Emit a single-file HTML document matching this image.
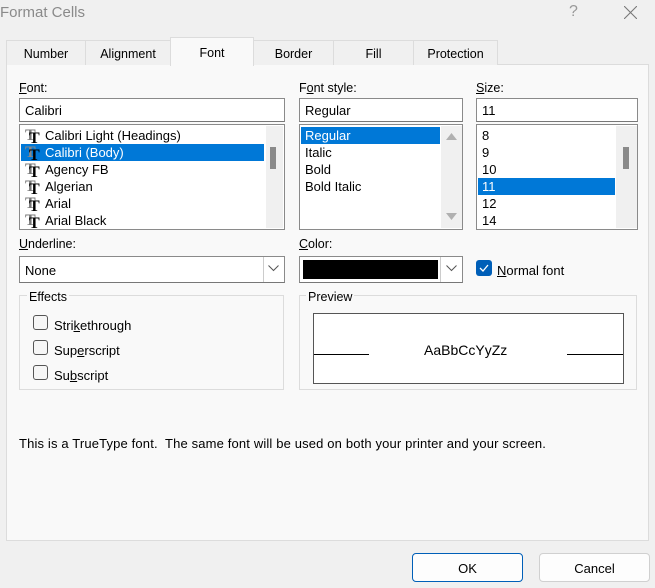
<!DOCTYPE html>
<html><head><style>
*{box-sizing:border-box;margin:0;padding:0}
body{width:655px;height:588px;background:#f0f0f0;font-family:"Liberation Sans",sans-serif;font-size:12.5px;color:#000;position:relative;overflow:hidden}
.a{position:absolute}
.tab{position:absolute;top:40px;height:25px;border:1px solid #dcdcdc;border-bottom:none;background:#f0f0f0;text-align:center;line-height:26px;font-size:12.5px}
.box{position:absolute;background:#fff;border:1px solid #8a8a8a}
.inp{position:absolute;background:#fff;border:1px solid #8a8a8a;border-bottom:1px solid #777;padding-left:5px;line-height:24px;font-size:13px}
.li{height:17px;line-height:18px;padding-left:4px;font-size:13px;white-space:nowrap}
.sel{background:#0078d7;color:#fff}
.tt{display:inline-block;width:16px;height:15px;position:relative;vertical-align:-3px;margin-right:4px;font-family:"Liberation Serif",serif;font-weight:bold}
.tt b{position:absolute;font-size:16px;line-height:15px}
.grp{position:absolute;border:1px solid #dcdcdc}
.cb{position:absolute;width:15px;height:15px;border:1px solid #555;border-radius:3px;background:#f6f6f6}
u{text-decoration:underline}
.btn{position:absolute;top:553px;width:111px;height:29px;background:#fdfdfd;border:1px solid #d0d0d0;border-radius:4px;text-align:center;line-height:29px;font-size:13px}
</style></head><body>
<div class="a" style="left:0;top:4px;font-size:15px;color:#8a8a8a">Format Cells</div>
<div class="a" style="left:569px;top:3px;font-size:16px;color:#999">?</div>
<svg class="a" style="left:624px;top:6px" width="13" height="13"><path d="M0 0L13 13M13 0L0 13" stroke="#777" stroke-width="1.1"/></svg>

<div class="a" style="left:6px;top:64px;width:643px;height:477px;background:#f9f9f9;border:1px solid #dcdcdc"></div>
<div class="tab" style="left:6px;width:80px">Number</div>
<div class="tab" style="left:85px;width:86px">Alignment</div>
<div class="tab" style="left:253px;width:81px">Border</div>
<div class="tab" style="left:333px;width:81px">Fill</div>
<div class="tab" style="left:413px;width:85px">Protection</div>
<div class="tab" style="left:170px;top:37px;height:29px;width:84px;background:#f9f9f9;line-height:30px">Font</div>

<div class="a" style="left:19px;top:81px"><u>F</u>ont:</div>
<div class="inp" style="left:19px;top:98px;width:266px;height:24px">Calibri</div>
<div class="box" style="left:19px;top:124px;width:266px;height:106px;padding-top:2px;padding-left:1px">
 <div class="li" style="width:243px"><span class="tt"><b style="left:0;top:0;color:#777">T</b><b style="left:4px;top:3px">T</b></span>Calibri Light (Headings)</div>
 <div class="li sel" style="width:243px"><span class="tt"><b style="left:0;top:0;color:#888">T</b><b style="left:4px;top:3px;color:#000">T</b></span>Calibri (Body)</div>
 <div class="li"><span class="tt"><b style="left:0;top:0;color:#777">T</b><b style="left:4px;top:3px">T</b></span>Agency FB</div>
 <div class="li"><span class="tt"><b style="left:0;top:0;color:#777">T</b><b style="left:4px;top:3px">T</b></span>Algerian</div>
 <div class="li"><span class="tt"><b style="left:0;top:0;color:#777">T</b><b style="left:4px;top:3px">T</b></span>Arial</div>
 <div class="li"><span class="tt"><b style="left:0;top:0;color:#777">T</b><b style="left:4px;top:3px">T</b></span>Arial Black</div>
 <div class="a" style="left:246px;top:1px;width:17px;height:102px;background:#f0f0f0"></div>
 <div class="a" style="left:250px;top:22px;width:6px;height:22px;background:#8a8a8a"></div>
</div>

<div class="a" style="left:299px;top:81px">F<u>o</u>nt style:</div>
<div class="inp" style="left:299px;top:98px;width:164px;height:24px">Regular</div>
<div class="box" style="left:299px;top:124px;width:164px;height:106px;padding-top:2px;padding-left:1px">
 <div class="li sel" style="width:139px">Regular</div>
 <div class="li">Italic</div><div class="li">Bold</div><div class="li">Bold Italic</div>
 <div class="a" style="left:141px;top:1px;width:21px;height:102px;background:#f0f0f0"></div>
 <svg class="a" style="left:146px;top:8px" width="11" height="8"><path d="M0 7L5.5 0L11 7Z" fill="#b0b0b0"/></svg>
 <svg class="a" style="left:146px;top:88px" width="11" height="8"><path d="M0 0L5.5 7L11 0Z" fill="#b0b0b0"/></svg>
</div>

<div class="a" style="left:476px;top:81px"><u>S</u>ize:</div>
<div class="inp" style="left:476px;top:98px;width:162px;height:24px">11</div>
<div class="box" style="left:476px;top:124px;width:162px;height:106px;padding-top:2px;padding-left:1px">
 <div class="li">8</div><div class="li">9</div><div class="li">10</div>
 <div class="li sel" style="width:137px">11</div><div class="li">12</div><div class="li">14</div>
 <div class="a" style="left:139px;top:1px;width:21px;height:102px;background:#f0f0f0"></div>
 <div class="a" style="left:146px;top:22px;width:6px;height:22px;background:#8a8a8a"></div>
</div>

<div class="a" style="left:19px;top:237px"><u>U</u>nderline:</div>
<div class="inp" style="left:19px;top:256px;width:266px;height:27px;line-height:27px">None</div>
<div class="a" style="left:263px;top:257px;width:21px;height:25px;border-left:1px solid #ccc;background:#fff"></div>
<svg class="a" style="left:268px;top:265px" width="11" height="7"><path d="M0.5 0.5L5.5 5.5L10.5 0.5" fill="none" stroke="#555"/></svg>

<div class="a" style="left:299px;top:237px"><u>C</u>olor:</div>
<div class="inp" style="left:299px;top:256px;width:164px;height:27px"></div>
<div class="a" style="left:303px;top:260px;width:135px;height:19px;background:#000"></div>
<div class="a" style="left:440px;top:257px;width:22px;height:25px;border-left:1px solid #ccc;background:#fff"></div>
<svg class="a" style="left:446px;top:265px" width="11" height="7"><path d="M0.5 0.5L5.5 5.5L10.5 0.5" fill="none" stroke="#555"/></svg>

<div class="a" style="left:476px;top:260px;width:16px;height:16px;background:#005fb8;border-radius:3px"></div>
<svg class="a" style="left:479px;top:264px" width="10" height="8"><path d="M1 4L4 7L9 1" fill="none" stroke="#fff" stroke-width="1.3"/></svg>
<div class="a" style="left:497px;top:263px;font-size:13px"><u>N</u>ormal font</div>

<div class="grp" style="left:19px;top:295px;width:265px;height:95px"></div>
<div class="a" style="left:27px;top:290px;background:#f9f9f9;padding:0 2px">Effects</div>
<div class="cb" style="left:33px;top:315px"></div><div class="a" style="left:54px;top:318px;font-size:13px">Stri<u>k</u>ethrough</div>
<div class="cb" style="left:33px;top:340px"></div><div class="a" style="left:54px;top:343px;font-size:13px">Sup<u>e</u>rscript</div>
<div class="cb" style="left:33px;top:365px"></div><div class="a" style="left:54px;top:368px;font-size:13px">Su<u>b</u>script</div>

<div class="grp" style="left:299px;top:295px;width:338px;height:95px"></div>
<div class="a" style="left:306px;top:290px;background:#f9f9f9;padding:0 2px">Preview</div>
<div class="a" style="left:313px;top:313px;width:311px;height:71px;background:#fff;border:1px solid #555"></div>
<div class="a" style="left:314px;top:354px;width:55px;height:1px;background:#000"></div>
<div class="a" style="left:567px;top:354px;width:56px;height:1px;background:#000"></div>
<div class="a" style="left:424px;top:342px;font-size:14px">AaBbCcYyZz</div>

<div class="a" style="left:19px;top:436px;font-size:13px;letter-spacing:0.15px">This is a TrueType font.&nbsp; The same font will be used on both your printer and your screen.</div>

<div class="btn" style="left:412px;border:1px solid #005fb8">OK</div>
<div class="btn" style="left:539px">Cancel</div>
</body></html>
